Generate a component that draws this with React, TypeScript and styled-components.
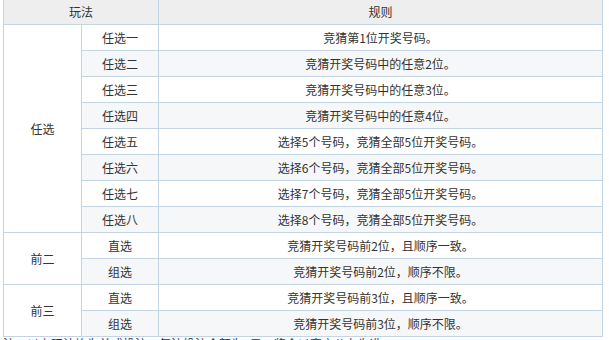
import React from "react";
import styled, { createGlobalStyle } from "styled-components";

const GlobalStyle = createGlobalStyle`
  html, body {
    margin: 0;
    padding: 0;
    background: #ffffff;
  }
  body {
    font-family: "Noto Sans CJK SC", "Liberation Sans", sans-serif;
    font-size: 12px;
    color: #333333;
  }
`;

const Page = styled.div`
  padding: 0 0 0 3px;
  width: 600px;
`;

const RuleTable = styled.table`
  width: 600px;
  border-collapse: collapse;
  table-layout: fixed;
  border: 1px solid #c3d4e4;
  border-top: none;
`;

const HeadCell = styled.th`
  height: 24px;
  padding: 0;
  background: #eeeeee;
  border: 1px solid #c3d4e4;
  border-top: none;
  font-weight: normal;
  font-size: 12px;
  color: #333333;
  text-align: center;
  line-height: 24px;
`;

const Cell = styled.td<{ $alt?: boolean }>`
  height: 25px;
  padding: 0;
  border: 1px solid #c3d4e4;
  background: ${(p) => (p.$alt ? "#f6f7f9" : "#ffffff")};
  text-align: center;
  line-height: 25px;
  font-size: 12px;
  color: #333333;
  white-space: nowrap;
`;

const GroupCell = styled(Cell)`
  background: #ffffff;
`;

const Note = styled.p`
  margin: 0;
  padding: 1px 0 0 0;
  line-height: 12px;
  font-size: 12px;
  color: #333333;
`;

type Row = { name: string; rule: string };
type Group = { title: string; rows: Row[] };

const groups: Group[] = [
  {
    title: "任选",
    rows: [
      { name: "任选一", rule: "竞猜第1位开奖号码。" },
      { name: "任选二", rule: "竞猜开奖号码中的任意2位。" },
      { name: "任选三", rule: "竞猜开奖号码中的任意3位。" },
      { name: "任选四", rule: "竞猜开奖号码中的任意4位。" },
      { name: "任选五", rule: "选择5个号码，竞猜全部5位开奖号码。" },
      { name: "任选六", rule: "选择6个号码，竞猜全部5位开奖号码。" },
      { name: "任选七", rule: "选择7个号码，竞猜全部5位开奖号码。" },
      { name: "任选八", rule: "选择8个号码，竞猜全部5位开奖号码。" },
    ],
  },
  {
    title: "前二",
    rows: [
      { name: "直选", rule: "竞猜开奖号码前2位，且顺序一致。" },
      { name: "组选", rule: "竞猜开奖号码前2位，顺序不限。" },
    ],
  },
  {
    title: "前三",
    rows: [
      { name: "直选", rule: "竞猜开奖号码前3位，且顺序一致。" },
      { name: "组选", rule: "竞猜开奖号码前3位，顺序不限。" },
    ],
  },
];

export default function App() {
  let index = 0;
  return (
    <Page>
      <GlobalStyle />
      <RuleTable>
        <colgroup>
          <col style={{ width: 78 }} />
          <col style={{ width: 77 }} />
          <col />
        </colgroup>
        <thead>
          <tr>
            <HeadCell colSpan={2}>玩法</HeadCell>
            <HeadCell>规则</HeadCell>
          </tr>
        </thead>
        <tbody>
          {groups.map((g) =>
            g.rows.map((r, i) => {
              const alt = index++ % 2 === 1;
              return (
                <tr key={g.title + r.name}>
                  {i === 0 && (
                    <GroupCell rowSpan={g.rows.length}>{g.title}</GroupCell>
                  )}
                  <Cell $alt={alt}>{r.name}</Cell>
                  <Cell $alt={alt}>{r.rule}</Cell>
                </tr>
              );
            })
          )}
        </tbody>
      </RuleTable>
      <Note>注：以上玩法均为单式投注，每注投注金额为2元，奖金以官方公布为准。</Note>
    </Page>
  );
}
